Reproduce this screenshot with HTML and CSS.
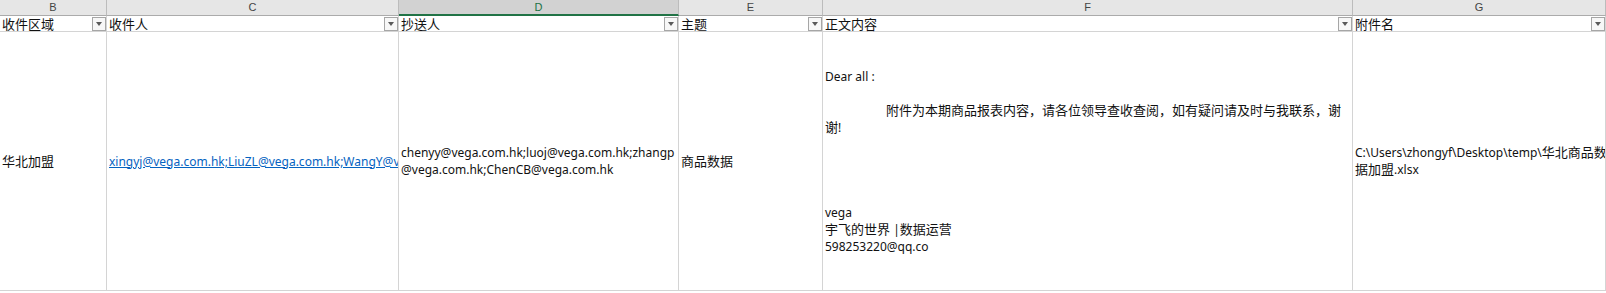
FILE: index.html
```html
<!DOCTYPE html>
<html lang="zh-CN">
<head>
<meta charset="utf-8">
<title>Sheet</title>
<link rel="stylesheet" href="styles.css">
</head>
<body>
<div class="sheet">
  <div class="colhead">B</div>
  <div class="colhead">C</div>
  <div class="colhead sel">D</div>
  <div class="colhead">E</div>
  <div class="colhead">F</div>
  <div class="colhead">G</div>

  <div class="hcell"><span class="htext">收件区域</span><span class="dd"></span></div>
  <div class="hcell"><span class="htext">收件人</span><span class="dd"></span></div>
  <div class="hcell"><span class="htext">抄送人</span><span class="dd"></span></div>
  <div class="hcell"><span class="htext">主题</span><span class="dd"></span></div>
  <div class="hcell"><span class="htext">正文内容</span><span class="dd"></span></div>
  <div class="hcell"><span class="htext">附件名</span><span class="dd"></span></div>

  <div class="dcell"><div class="lines"><span class="cjk">华北加盟</span></div></div>
  <div class="dcell clip"><div class="lines"><span class="link">xingyj@vega.com.hk;LiuZL@vega.com.hk;WangY@vega.com.hk</span></div></div>
  <div class="dcell"><div class="lines"><div>chenyy@vega.com.hk;luoj@vega.com.hk;zhangp</div><div>@vega.com.hk;ChenCB@vega.com.hk</div></div></div>
  <div class="dcell"><div class="lines"><span class="cjk">商品数据</span></div></div>
  <div class="dcell"><div class="lines">
    <div>Dear all :</div>
    <div class="blank"></div>
    <div class="indent"><span class="cjk">附件为本期商品报表内容，请各位领导查收查阅，如有疑问请及时与我联系，谢</span></div>
    <div><span class="cjk">谢</span>!</div>
    <div class="blank"></div>
    <div class="blank"></div>
    <div class="blank"></div>
    <div class="blank"></div>
    <div>vega</div>
    <div><span class="cjk">宇飞的世界</span> |<span class="cjk">数据运营</span></div>
    <div>598253220@qq.co</div>
  </div></div>
  <div class="dcell"><div class="lines"><div>C:\Users\zhongyf\Desktop\temp\<span class="cjk">华北商品数</span></div><div><span class="cjk">据加盟</span>.xlsx</div></div></div>
</div>
</body>
</html>
```

FILE: styles.css
```css
html, body {
  margin: 0;
  padding: 0;
  background: #ffffff;
}
body {
  width: 1606px;
  height: 293px;
  overflow: hidden;
  font-family: "Noto Sans", "Noto Sans CJK SC", sans-serif;
  color: #000;
}
.sheet {
  display: grid;
  grid-template-columns: 107px 292px 280px 144px 530px 253px;
  grid-template-rows: 16px 16px 259px;
  width: 1606px;
}
.colhead {
  box-sizing: border-box;
  background: #e6e6e6;
  border-right: 1px solid #bcbcbc;
  border-bottom: 1px solid #ababab;
  font-family: "Liberation Sans", Arial, sans-serif;
  font-size: 11px;
  line-height: 15px;
  color: #444;
  text-align: center;
}
.colhead.sel {
  background: #d2d2d2;
  color: #217346;
  border-bottom: 2px solid #217346;
}
.hcell {
  box-sizing: border-box;
  display: flex;
  align-items: center;
  border-right: 1px solid #d4d4d4;
  border-bottom: 1px solid #d4d4d4;
  padding-left: 2px;
  font-family: "Noto Sans CJK SC", sans-serif;
  font-size: 13px;
  line-height: 15px;
  white-space: nowrap;
  color: #111;
}
.htext {
  flex: 1;
}
.dd {
  box-sizing: border-box;
  width: 14px;
  height: 14px;
  border: 1px solid #a6a6a6;
  background: #f7f7f7;
  display: flex;
  align-items: center;
  justify-content: center;
  flex: none;
}
.dd::after {
  content: "";
  width: 0;
  height: 0;
  border-left: 3.5px solid transparent;
  border-right: 3.5px solid transparent;
  border-top: 4px solid #595959;
}
.dcell {
  box-sizing: border-box;
  display: flex;
  align-items: center;
  border-right: 1px solid #d4d4d4;
  border-bottom: 1px solid #d4d4d4;
  padding-left: 2px;
  font-size: 12px;
  line-height: 17px;
  white-space: nowrap;
  overflow: hidden;
  color: #111;
}
.cjk {
  font-size: 13px;
}
.lines {
  min-width: 0;
}
.clip .lines {
  overflow: hidden;
}
.link {
  color: #0563c1;
  text-decoration: underline;
}
.blank {
  height: 17px;
}
.indent {
  padding-left: 61px;
}
```
